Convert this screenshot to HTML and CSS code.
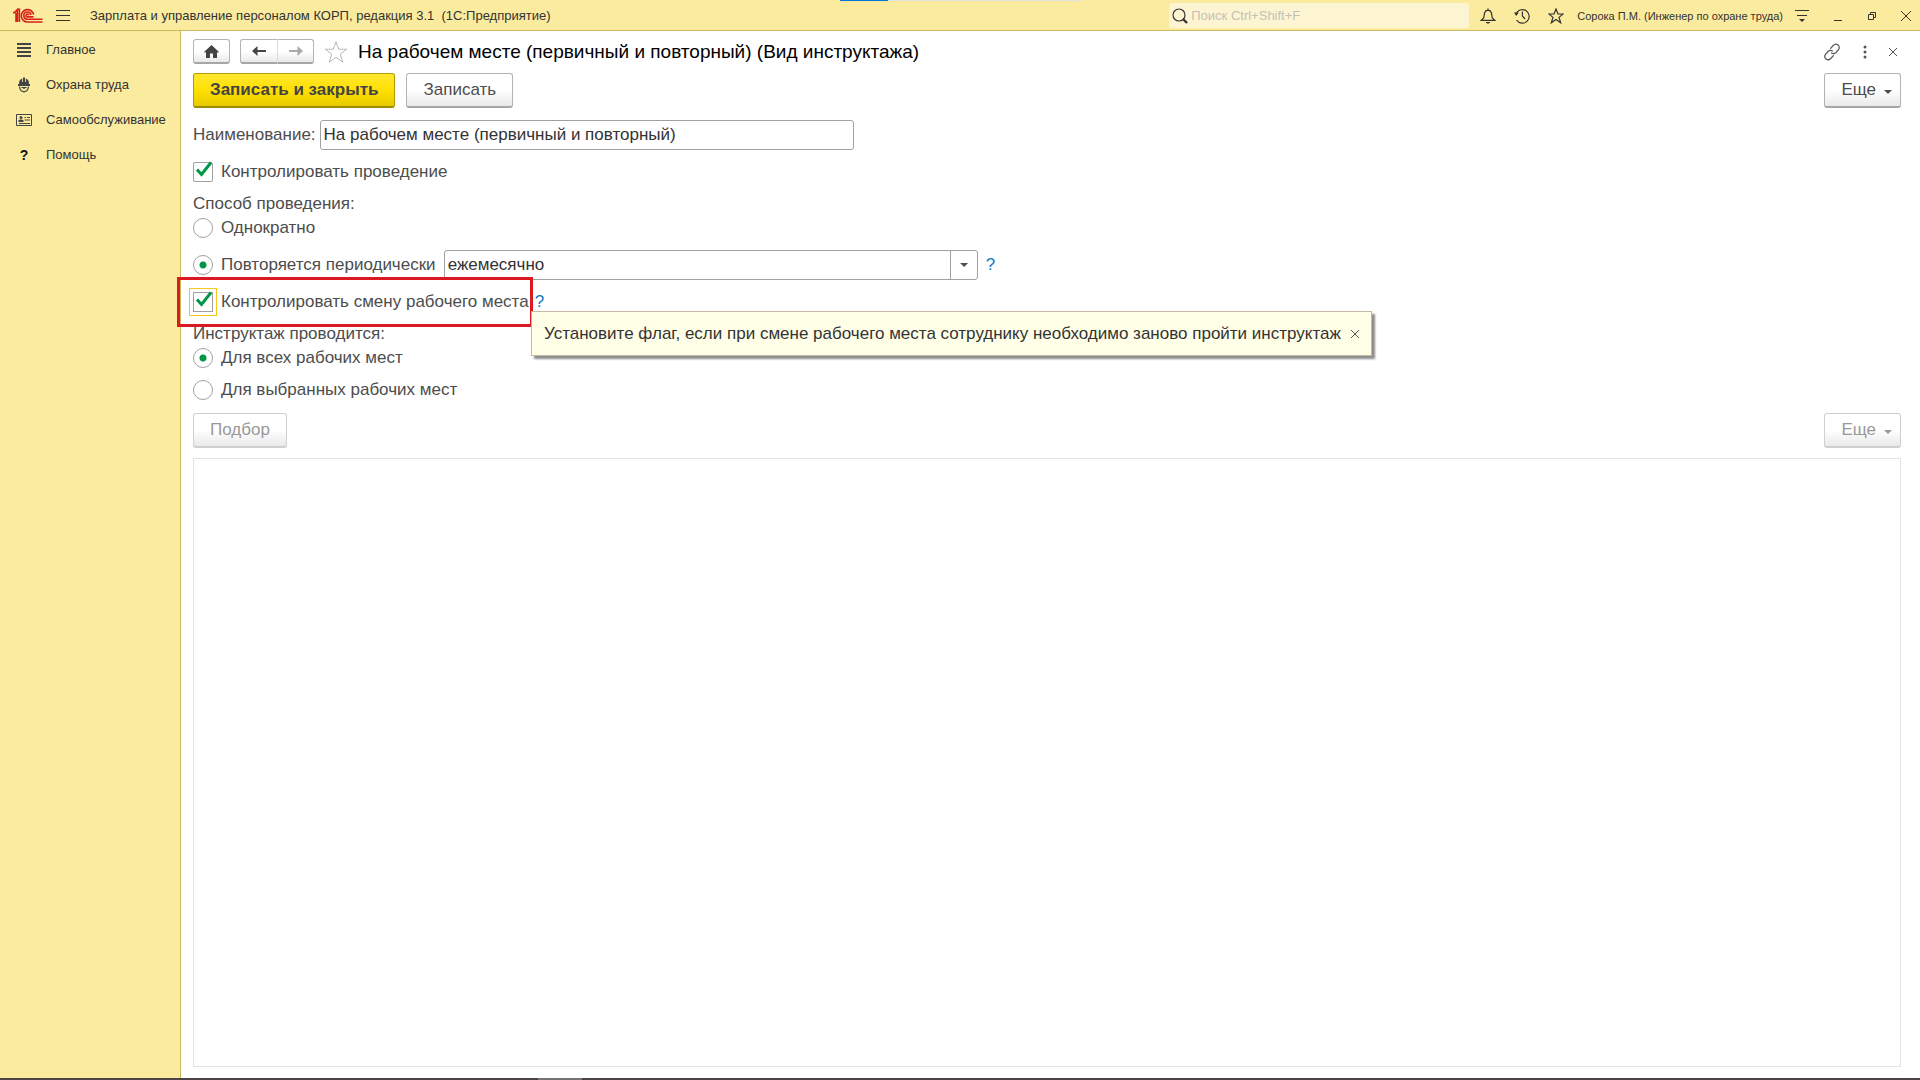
FILE: index.html
```html
<!DOCTYPE html>
<html lang="ru">
<head>
	<meta charset="utf-8">
	<meta name="viewport" content="width=device-width, initial-scale=1">
	<title>Зарплата и управление персоналом КОРП</title>
	<link rel="stylesheet" href="styles.css">
</head>
<body>
	<header class="titlebar">
		<div class="progress"><span class="progress-value"></span></div>
		<svg class="logo" width="30" height="16" viewBox="0 0 30 16" fill="none" stroke="#d9201a" stroke-width="1.6">
			<path d="M0 4.6h1.6L4.4 1.6V14M3 5v9M6.4 .6V14M4.2 1.2h2.2"/>
			<path d="M20.6 6.6A6.2 6.2 0 1 0 14.6 14H29.5"/>
			<path d="M18 7A3.6 3.6 0 1 0 14.6 11.2H29.5"/>
			<path d="M15.8 7.4a1.4 1.4 0 1 0-1.3 1.5h6"/>
		</svg>
		<button class="icon-btn menu-btn" aria-label="Меню">
			<svg width="14" height="12" viewBox="0 0 14 12" stroke="#333"><path d="M0 .5h14M0 5.5h14M0 10.5h14"/></svg>
		</button>
		<span class="app-title">Зарплата и управление персоналом КОРП, редакция 3.1&nbsp; (1С:Предприятие)</span>
		<label class="search">
			<svg width="16" height="16" viewBox="0 0 16 16" fill="none" stroke="#333"><circle cx="7" cy="7" r="6" stroke-width="1.2"/><path d="M11 11l4 4" stroke-width="2.4"/></svg>
			<input type="text" placeholder="Поиск Ctrl+Shift+F" aria-label="Поиск">
		</label>
		<div class="title-icons">
			<button class="icon-btn" aria-label="Оповещения">
				<svg width="16" height="16" viewBox="0 0 16 16" fill="none" stroke="#333" stroke-width="1.2"><path d="M1.2 12.4L3.8 9.6 4.6 4.8Q5.4 2.4 8 2.2 10.6 2.4 11.4 4.8L12.2 9.6 14.8 12.4ZM8 .6v1.6"/><path d="M5.6 14h4.8L9 15.6H7z" fill="#333" stroke="none"/></svg>
			</button>
			<button class="icon-btn" aria-label="История">
				<svg width="16" height="16" viewBox="0 0 16 16" fill="none" stroke="#333" stroke-width="1.2"><path d="M1.9 6.2A6.8 6.8 0 1 1 2.6 12"/><path d="M8.4 3.6V8l2.6 3"/><path d="M0 4.6h4.8L2.2 8z" fill="#333" stroke="none"/></svg>
			</button>
			<button class="icon-btn" aria-label="Избранное">
				<svg width="16" height="16" viewBox="0 0 16 16" fill="none" stroke="#333" stroke-width="1.2"><path d="M8 1l2 5h5.2L11 9.4l1.7 5.4L8 11.5l-4.7 3.3L5 9.4.8 6H6z"/></svg>
			</button>
		</div>
		<span class="user">Сорока П.М. (Инженер по охране труда)</span>
		<div class="window-icons">
			<button class="icon-btn" aria-label="Настройки">
				<svg width="14" height="14" viewBox="0 0 14 14" stroke="#333"><path d="M0 1.500h14M2 6.500h10"/><path d="M4 10h6l-3 3z" fill="#333" stroke="none"/></svg>
			</button>
			<button class="icon-btn" aria-label="Свернуть">
				<svg width="10" height="10" viewBox="0 0 10 10" stroke="#333"><path d="M1 9.5h8"/></svg>
			</button>
			<button class="icon-btn" aria-label="Восстановить">
				<svg width="10" height="10" viewBox="0 0 10 10" fill="none" stroke="#333"><path d="M1.5 3.5h5v5h-5zM3.5 3V1.5h5v5H7"/></svg>
			</button>
			<button class="icon-btn" aria-label="Закрыть программу">
				<svg width="10" height="10" viewBox="0 0 10 10" stroke="#333"><path d="M0 0l10 10M10 0L0 10"/></svg>
			</button>
		</div>
	</header>

	<div class="workspace">
		<nav class="sidebar">
			<a class="section" href="#">
				<svg width="16" height="16" viewBox="0 0 16 16" stroke="#444" stroke-width="2"><path d="M1 2h14M1 6h14M1 10h14M1 14h14"/></svg>
				Главное
			</a>
			<a class="section" href="#">
				<svg width="16" height="16" viewBox="0 0 16 16" fill="#444"><path d="M3 7Q3 2.4 6.2 1.6V5H7V.6h2V5h.8V1.6Q13 2.4 13 7h1v2H2V7z"/><path d="M3.500 9.500Q4 14.500 8 14.800 12 14.500 12.500 9.500" fill="none" stroke="#444" stroke-width="1.2"/><path d="M4.600 10h6.800L8 12z"/></svg>
				Охрана труда
			</a>
			<a class="section" href="#">
				<svg width="16" height="16" viewBox="0 0 16 16" fill="none" stroke="#444"><path d="M.5 2.5h15v11H.5z"/><path d="M8.5 5.5H10M11 5.5h3M8.5 8h5.5M3 11.5h11"/><circle cx="5" cy="5.6" r="1.5" fill="#444" stroke="none"/><path d="M2.4 10V8.4L4 7.4h2l1.6 1V10z" fill="#444" stroke="none"/></svg>
				Самообслуживание
			</a>
			<a class="section" href="#">
				<span class="help-sign">?</span>
				Помощь
			</a>
		</nav>

		<main class="form">
			<div class="nav-row">
				<button class="btn nav-btn" aria-label="Начальная страница">
					<svg width="15" height="13" viewBox="0 0 15 13" fill="#444"><path d="M7.5 0L15 7l-1 .8L13 7v6H9V8.5H6V13H2V7l-1 .8L0 7z"/></svg>
				</button>
				<div class="nav-pair">
					<button class="btn nav-btn" aria-label="Назад">
						<svg width="14" height="10" viewBox="0 0 14 10" stroke="#444" stroke-width="2"><path d="M3 5h11"/><path d="M0 5L5.5 0v3.5L5 5l.5 1.5V10z" fill="#444" stroke="none"/></svg>
					</button>
					<button class="btn nav-btn" aria-label="Вперед">
						<svg width="14" height="10" viewBox="0 0 14 10" stroke="#aaa" stroke-width="2"><path d="M0 5h11"/><path d="M14 5L8.5 0v3.5L9 5l-.5 1.5V10z" fill="#aaa" stroke="none"/></svg>
					</button>
				</div>
				<button class="icon-btn favorite" aria-label="Добавить в избранное">
					<svg width="24" height="24" viewBox="0 0 24 24" fill="#fff" stroke="#b4bac0"><path d="M12 1.6l2.7 7.6h8l-6.4 4.9 2.4 8L12 17.4l-6.700 4.700 2.400-8L1.300 9.200h8z"/></svg>
				</button>
				<h1 class="form-title">На рабочем месте (первичный и повторный) (Вид инструктажа)</h1>
				<div class="form-icons">
					<button class="icon-btn" aria-label="Получить ссылку">
						<svg width="18" height="18" viewBox="0 0 18 18" fill="none" stroke="#555" stroke-width="1.2" stroke-linecap="round"><path d="M7.600 5.400l2.600-2.900q2.400-2.300 4.800-.6 2.300 2.200.5 4.800l-2.700 3q-2.200 1.800-4.300.3"/><path d="M10.400 12.600l-2.600 2.900q-2.400 2.300-4.800.6-2.300-2.200-.5-4.800l2.700-3q2.200-1.800 4.300-.3"/></svg>
					</button>
					<button class="icon-btn" aria-label="Действия">
						<svg width="4" height="14" viewBox="0 0 4 14" fill="#555"><circle cx="2" cy="2" r="1.5"/><circle cx="2" cy="7" r="1.5"/><circle cx="2" cy="12" r="1.5"/></svg>
					</button>
					<button class="icon-btn" aria-label="Закрыть">
						<svg width="8" height="8" viewBox="0 0 8 8" stroke="#555"><path d="M0 0l8 8M8 0L0 8"/></svg>
					</button>
				</div>
			</div>

			<div class="commands">
				<button class="btn primary">Записать и закрыть</button>
				<button class="btn">Записать</button>
				<button class="btn more">Еще <span class="caret"></span></button>
			</div>

			<div class="row field-row">
				<label for="name">Наименование:</label>
				<input class="text-input" id="name" type="text" value="На рабочем месте (первичный и повторный)">
			</div>

			<label class="row option">
				<span class="check">
					<input type="checkbox" checked>
					<svg width="18" height="17" viewBox="0 0 18 17" fill="none" stroke="#009646" stroke-width="3"><path d="M2 8.500l4.500 5L16 1.500"/></svg>
				</span>
				Контролировать проведение
			</label>

			<div class="row">Способ проведения:</div>
			<label class="row option first-option"><input type="radio" name="method"> Однократно</label>
			<div class="row field-row">
				<label class="option"><input type="radio" name="method" checked> Повторяется периодически</label>
				<div class="combo">
					<select aria-label="Периодичность">
						<option>ежемесячно</option>
					</select>
					<span class="combo-arrow"><span class="caret"></span></span>
				</div>
				<a class="hint" href="#">?</a>
			</div>

			<div class="row change-row">
				<label class="option">
					<span class="check focused">
						<input type="checkbox" checked>
						<svg width="18" height="17" viewBox="0 0 18 17" fill="none" stroke="#009646" stroke-width="3"><path d="M2 8.500l4.500 5L16 1.500"/></svg>
					</span>
					Контролировать смену рабочего места
				</label>
				<a class="hint" href="#">?</a>
				<div class="marker"></div>
				<div class="tooltip" role="tooltip">
					Установите флаг, если при смене рабочего места сотруднику необходимо заново пройти инструктаж
					<button class="icon-btn" aria-label="Закрыть подсказку">
						<svg width="8" height="8" viewBox="0 0 8 8" stroke="#555"><path d="M0 0l8 8M8 0L0 8"/></svg>
					</button>
				</div>
			</div>

			<div class="row">Инструктаж проводится:</div>
			<label class="row option first-option"><input type="radio" name="places" checked> Для всех рабочих мест</label>
			<label class="row option"><input type="radio" name="places"> Для выбранных рабочих мест</label>

			<div class="commands list-commands">
				<button class="btn" disabled>Подбор</button>
				<button class="btn more" disabled>Еще <span class="caret"></span></button>
			</div>
			<div class="list"></div>
		</main>
	</div>
	<footer class="taskbar"></footer>
</body>
</html>
```
FILE: styles.css
```css
* {
	box-sizing: border-box;
}
body {
	display: flex;
	flex-direction: column;
	height: 100vh;
	margin: 0;
	font: 17px/20px "Liberation Sans", Arial, sans-serif;
	color: #4d4d4d;
	background: #fff;
}
button, input, select {
	font: inherit;
	color: inherit;
}
svg {
	display: block;
	flex: none;
}
.icon-btn {
	display: flex;
	align-items: center;
	justify-content: center;
	padding: 0;
	border: 0;
	background: none;
}

/* title bar */
.titlebar {
	position: relative;
	display: flex;
	align-items: center;
	flex: none;
	height: 31px;
	padding: 1px 9px 0 13px;
	border-bottom: 1px solid #c9b961;
	background: #fbeb9e;
	font-size: 13px;
	color: #333;
}
.progress {
	position: absolute;
	top: 0;
	left: 840px;
	width: 241px;
	height: 1px;
	background: #e3e3e3;
}
.progress-value {
	display: block;
	width: 20%;
	height: 1px;
	background: #0078d7;
}
.menu-btn {
	margin-left: 13px;
}
.app-title {
	margin-left: 20px;
}
.search {
	display: flex;
	align-items: center;
	width: 300px;
	height: 25px;
	margin-left: auto;
	padding-left: 3px;
	border-radius: 3px;
	background: #fdf5d2;
}
.search input {
	flex: 1;
	min-width: 0;
	padding: 0 3px;
	border: 0;
	background: none;
}
.search input::placeholder {
	color: #c4c1b4;
}
.title-icons {
	display: flex;
	gap: 18px;
	margin: 0 13px 0 11px;
}
.user {
	font-size: 11px;
}
.window-icons {
	display: flex;
	align-items: center;
	gap: 24px;
	margin-left: 12px;
}

/* sections */
.workspace {
	display: flex;
	flex: 1;
	min-height: 0;
}
.sidebar {
	flex: none;
	width: 181px;
	padding-top: 1px;
	border-right: 1px solid #c9b961;
	background: #fbeb9e;
}
.section {
	display: flex;
	align-items: center;
	gap: 14px;
	height: 35px;
	padding-left: 16px;
	font-size: 13px;
	color: #333;
	text-decoration: none;
}
.help-sign {
	width: 16px;
	font-size: 14px;
	font-weight: bold;
	text-align: center;
	color: #111;
}

/* form */
.form {
	display: flex;
	flex-direction: column;
	flex: 1;
	min-width: 0;
	padding: 8px 19px 11px 12px;
}
.nav-row {
	display: flex;
	align-items: center;
	margin-bottom: 9px;
}
.btn {
	height: 35px;
	padding: 0 16px;
	border: 1px solid #b3b3b3;
	border-bottom: 2px solid #a6a6a6;
	border-radius: 3px;
	background: linear-gradient(#fff 50%, #e9e9e9);
}
.btn:disabled {
	border-color: #cfcfcf;
	color: #999;
}
.nav-btn {
	display: flex;
	align-items: center;
	justify-content: center;
	width: 37px;
	height: 25px;
	padding: 0;
}
.nav-pair {
	display: flex;
	margin: 0 10px;
}
.nav-pair .nav-btn:first-child {
	border-right: 0;
	border-radius: 3px 0 0 3px;
}
.nav-pair .nav-btn:last-child {
	border-left-color: #d9d9d9;
	border-radius: 0 3px 3px 0;
}
.form-title {
	margin: 0 0 0 10px;
	font-size: 19px;
	font-weight: normal;
	color: #000;
}
.form-icons {
	display: flex;
	align-items: center;
	gap: 22px;
	margin-left: auto;
	padding-right: 4px;
}
.commands {
	display: flex;
	gap: 11px;
}
.primary {
	border-color: #b09c00;
	border-bottom-color: #9c8a00;
	background: linear-gradient(#ffe833, #ffe000 50%, #e8cb00);
	font-weight: bold;
	color: #444;
}
.more {
	display: flex;
	align-items: center;
	gap: 8px;
	margin-left: auto;
	padding-right: 8px;
}
.caret {
	width: 8px;
	height: 4px;
	background: currentColor;
	clip-path: polygon(0 0, 100% 0, 50% 100%);
}
.more .caret {
	margin-top: 4px;
}
.row {
	margin-top: 12px;
}
.field-row {
	display: flex;
	align-items: center;
	gap: 4px;
}
.text-input, .combo select {
	height: 30px;
	padding: 0 3px;
	border: 1px solid #a0a0a0;
	border-radius: 3px;
	background: #fff;
	color: #333;
}
.text-input {
	width: 534px;
}
.option {
	display: flex;
	align-items: center;
	gap: 8px;
	height: 20px;
}
.row.option {
	align-self: flex-start;
}
.first-option {
	margin-top: 4px;
}
.option input {
	flex: none;
	width: 20px;
	height: 20px;
	margin: 0;
	border: 1px solid #a0a0a0;
	background: #fff;
	appearance: none;
}
.option input[type=radio] {
	border-radius: 50%;
}
.option input[type=radio]:checked {
	background: radial-gradient(#009646 3px, #fff 4px);
}
.check {
	position: relative;
}
.check input {
	display: block;
	border-radius: 2px;
}
.check svg {
	position: absolute;
	top: -1px;
	left: 2px;
}
.check.focused input {
	border-radius: 0;
	outline: 1px solid #f8c81c;
	outline-offset: 3px;
}
.combo {
	position: relative;
	width: 534px;
	margin: 0 4px;
}
.combo select {
	width: 100%;
	appearance: none;
}
.combo-arrow {
	position: absolute;
	top: 0;
	right: 0;
	display: flex;
	align-items: center;
	justify-content: center;
	width: 28px;
	height: 30px;
	border-left: 1px solid #a0a0a0;
	pointer-events: none;
}
.hint {
	color: #0f78c8;
	text-decoration: none;
}
.change-row {
	position: relative;
	display: flex;
	align-self: flex-start;
	gap: 6px;
}
.marker {
	position: absolute;
	inset: -15px 11px -15px -16px;
	border: 3px solid #da1a20;
}
.tooltip {
	position: absolute;
	top: 19px;
	left: 338px;
	z-index: 1;
	display: flex;
	align-items: center;
	gap: 10px;
	height: 45px;
	padding: 0 12px;
	border: 1px solid #c4baa4;
	background: #ffffe8;
	box-shadow: 3px 3px 2px #8c8c8c;
	color: #333;
	white-space: nowrap;
}
.list-commands {
	margin-top: 13px;
}
.list {
	flex: 1;
	margin-top: 10px;
	border: 1px solid #e3e3e3;
}
.taskbar {
	flex: none;
	height: 2px;
	background: linear-gradient(90deg, transparent 538px, #757270 538px 582px, transparent 582px) #4b4643;
}
```
